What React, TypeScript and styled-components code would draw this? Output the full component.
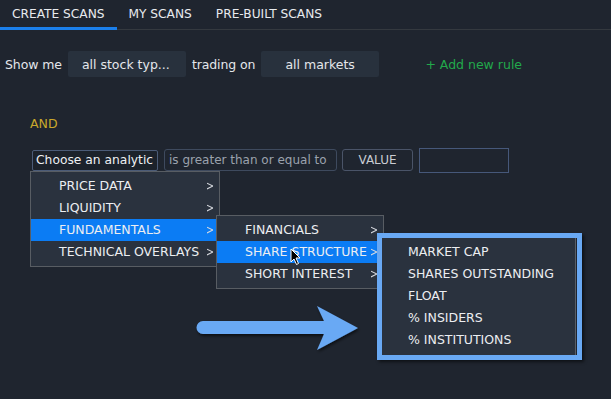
import React from 'react';
import styled, { createGlobalStyle } from 'styled-components';

const GlobalStyle = createGlobalStyle`
  html, body {
    margin: 0;
    padding: 0;
    background: #1f252f;
  }
  body {
    font-family: "DejaVu Sans", Verdana, sans-serif;
    color: #e4e7eb;
  }
`;

const tabs = ['CREATE SCANS', 'MY SCANS', 'PRE-BUILT SCANS'];
const analytics = ['PRICE DATA', 'LIQUIDITY', 'FUNDAMENTALS', 'TECHNICAL OVERLAYS'];
const fundamentals = ['FINANCIALS', 'SHARE STRUCTURE', 'SHORT INTEREST'];
const shareStructure = ['MARKET CAP', 'SHARES OUTSTANDING', 'FLOAT', '% INSIDERS', '% INSTITUTIONS'];

export default function App() {
  return (
    <StyledPage>
      <GlobalStyle />
      <StyledTabs>
        {tabs.map((tab, i) => (
          <StyledTab key={tab} active={i === 0}>{tab}</StyledTab>
        ))}
      </StyledTabs>

      <StyledFilterRow>
        <StyledLabel>Show me</StyledLabel>
        <StyledPicker pad={14} width={118}>all stock typ...</StyledPicker>
        <StyledLabel>trading on</StyledLabel>
        <StyledPicker pad={24} width={118}>all markets</StyledPicker>
        <StyledAddRule>+ Add new rule</StyledAddRule>
      </StyledFilterRow>

      <StyledAnd>AND</StyledAnd>

      <StyledRuleRow>
        <StyledAnalytic>
          Choose an analytic
          <StyledMenu width={190}>
            {analytics.map((item) => (
              <StyledItem key={item} active={item === 'FUNDAMENTALS'}>
                <span>{item}</span>
                <StyledChevron>&gt;</StyledChevron>
                {item === 'FUNDAMENTALS' && (
                  <StyledSubMenu width={168}>
                    {fundamentals.map((sub) => (
                      <StyledItem key={sub} active={sub === 'SHARE STRUCTURE'}>
                        <span>{sub}</span>
                        <StyledChevron>&gt;</StyledChevron>
                        {sub === 'SHARE STRUCTURE' && (
                          <>
                            <Cursor />
                            <StyledLeafMenu>
                              {shareStructure.map((leaf) => (
                                <StyledLeaf key={leaf}>{leaf}</StyledLeaf>
                              ))}
                              <StyledHighlight />
                            </StyledLeafMenu>
                          </>
                        )}
                      </StyledItem>
                    ))}
                  </StyledSubMenu>
                )}
              </StyledItem>
            ))}
          </StyledMenu>
        </StyledAnalytic>
        <StyledOperator>is greater than or equal to</StyledOperator>
        <StyledValueButton>VALUE</StyledValueButton>
        <StyledValueInput />
      </StyledRuleRow>

      <StyledArrow width="172" height="50" viewBox="0 0 172 50">
        <defs>
          <filter id="sh" x="-10%" y="-20%" width="130%" height="160%">
            <feDropShadow dx="1" dy="2" stdDeviation="1.5" floodColor="#000" floodOpacity="0.6" />
          </filter>
        </defs>
        <path
          filter="url(#sh)"
          fill="#69a9f4"
          d="M13 17 H134 L127 2 L168 24 L127 46 L134 30 H13 A6.5 6.5 0 0 1 13 17 Z"
        />
      </StyledArrow>
    </StyledPage>
  );
}

function Cursor() {
  return (
    <StyledCursor width="12" height="18" viewBox="0 0 12 18">
      <path
        d="M1 1 V14 L4 11 L6.5 16.5 L8.5 15.5 L6 10 H10 Z"
        fill="#000"
        stroke="#fff"
        strokeWidth="1"
        strokeLinejoin="round"
      />
    </StyledCursor>
  );
}

const StyledPage = styled.div`
  position: relative;
  width: 611px;
  height: 399px;
  overflow: hidden;
`;

const StyledTabs = styled.div`
  display: flex;
  height: 29px;
  border-bottom: 1px solid #34393f;
`;

const StyledTab = styled.div<{ active?: boolean }>`
  display: flex;
  align-items: center;
  padding: 1px 12px 0 12px;
  font-size: 12.2px;
  color: #e8eaee;
  border-bottom: 3px solid ${(p) => (p.active ? '#1b7fea' : 'transparent')};
  margin-bottom: -1px;
  box-sizing: border-box;
  height: 30px;
`;

const StyledFilterRow = styled.div`
  display: flex;
  align-items: center;
  gap: 6px;
  margin-top: 21px;
  padding-left: 5px;
  height: 26px;
`;

const StyledLabel = styled.span`
  font-size: 12.5px;
  color: #e4e7eb;
  letter-spacing: -0.1px;
`;

const StyledPicker = styled.div<{ pad: number; width: number }>`
  box-sizing: border-box;
  width: ${(p) => p.width}px;
  height: 26px;
  padding-left: ${(p) => p.pad}px;
  display: flex;
  align-items: center;
  background: #28313d;
  border-radius: 2px;
  font-size: 12.5px;
  color: #e4e7eb;
  white-space: nowrap;
`;

const StyledAddRule = styled.span`
  margin-left: 40px;
  font-size: 12.5px;
  color: #22a94b;
`;

const StyledAnd = styled.div`
  margin-top: 39px;
  padding-left: 30px;
  font-size: 12.5px;
  color: #c9a82b;
  height: 16px;
`;

const StyledRuleRow = styled.div`
  display: flex;
  align-items: center;
  margin-top: 16px;
  padding-left: 32px;
  gap: 6px;
  height: 24px;
`;

const StyledAnalytic = styled.div`
  position: relative;
  box-sizing: border-box;
  width: 126px;
  height: 21px;
  padding: 0 3px;
  display: flex;
  align-items: center;
  border: 1px solid #4b5b77;
  border-radius: 2px;
  background: #1c222b;
  font-size: 12.3px;
  color: #eef0f3;
  white-space: nowrap;
`;

const StyledOperator = styled.div`
  box-sizing: border-box;
  height: 22px;
  width: 173px;
  padding: 0 4px;
  display: flex;
  align-items: center;
  border: 1px solid #3e4a5e;
  border-radius: 3px;
  font-size: 12px;
  color: #9ba2ad;
  white-space: nowrap;
  overflow: hidden;
`;

const StyledValueButton = styled.div`
  box-sizing: border-box;
  height: 22px;
  width: 71px;
  display: flex;
  align-items: center;
  justify-content: center;
  border: 1px solid #4a5468;
  border-radius: 3px;
  font-size: 12px;
  color: #c9ccd2;
  margin-left: -1px;
`;

const StyledValueInput = styled.div`
  box-sizing: border-box;
  height: 25px;
  width: 90px;
  border: 1px solid #46587a;
`;

const StyledMenu = styled.div<{ width: number }>`
  position: absolute;
  top: 20px;
  left: -3px;
  box-sizing: border-box;
  width: ${(p) => p.width}px;
  padding: 3px 0;
  background: #2a323e;
  border: 1px solid #585d63;
  z-index: 2;
`;

const StyledSubMenu = styled(StyledMenu)`
  top: -4px;
  left: calc(100% - 3px);
`;

const StyledItem = styled.div<{ active?: boolean }>`
  position: relative;
  display: flex;
  align-items: center;
  justify-content: space-between;
  height: 22px;
  padding: 0 4px 0 28px;
  font-size: 12.5px;
  color: #eceef1;
  background: ${(p) => (p.active ? '#0b7cf4' : 'transparent')};
`;

const StyledChevron = styled.span`
  font-size: 12px;
  color: #d8dbe0;
  transform: scaleX(0.8);
`;

const StyledLeafMenu = styled.div`
  position: absolute;
  top: -3px;
  left: calc(100% - 1px);
  box-sizing: border-box;
  width: 194px;
  padding: 3px 0 4px;
  background: #2a323e;
  border-right: 1px solid #5a5f66;
  border-bottom: 1px solid #5a5f66;
  z-index: 3;
`;

const StyledLeaf = styled.div`
  height: 22px;
  display: flex;
  align-items: center;
  padding-left: 26px;
  font-size: 12.5px;
  color: #eceef1;
  white-space: nowrap;
`;

const StyledHighlight = styled.div`
  position: absolute;
  top: -5px;
  left: -5px;
  right: -7px;
  bottom: -5px;
  border: 5px solid #69a9f4;
  box-shadow: 2px 2px 3px rgba(0, 0, 0, 0.55);
  pointer-events: none;
`;

const StyledCursor = styled.svg`
  position: absolute;
  left: 73px;
  top: 7px;
  z-index: 4;
`;

const StyledArrow = styled.svg`
  position: absolute;
  left: 190px;
  top: 304px;
  z-index: 5;
`;
